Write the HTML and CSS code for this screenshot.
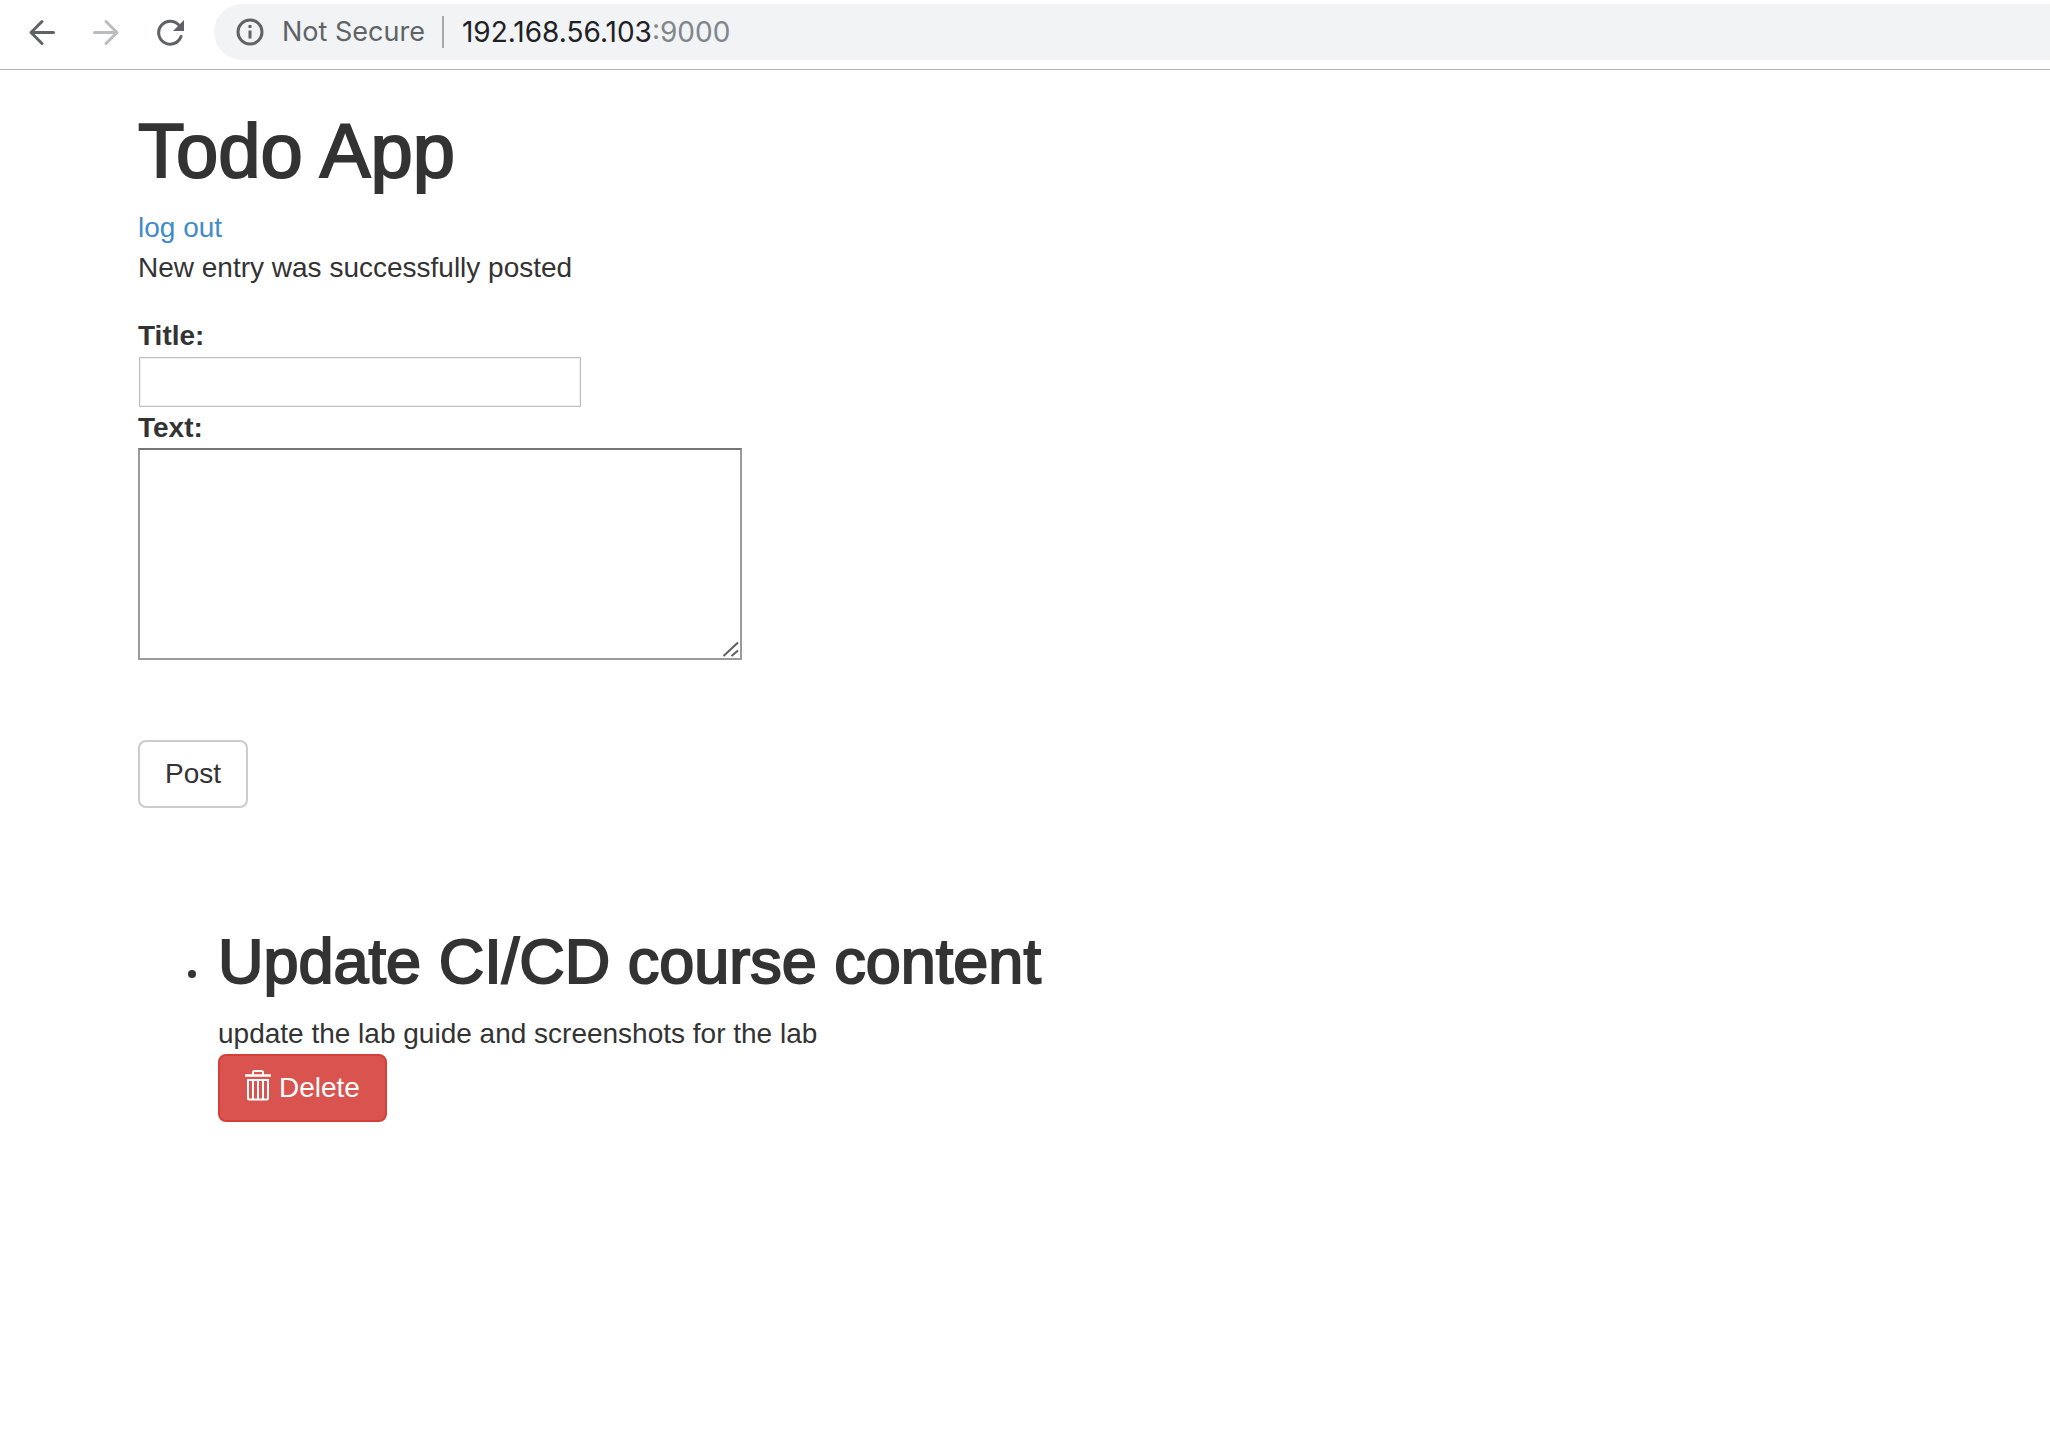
FILE: index.html
```html
<!DOCTYPE html>
<html lang="en">
<head>
<meta charset="utf-8">
<title>Todo App</title>
<link rel="stylesheet" href="styles.css">
</head>
<body>
<header class="toolbar">
  <nav class="nav-buttons" aria-label="Browser">
    <button class="icon-button" type="button" aria-label="Back">
      <svg width="28" height="28" viewBox="0 0 28 28" fill="none" stroke="#5f6368" stroke-width="3" stroke-linecap="round" stroke-linejoin="round"><path d="M25.5 14.5H3M14 3.500L3 14.500L14 25.500"/></svg>
    </button>
    <button class="icon-button" type="button" aria-label="Forward" disabled>
      <svg width="28" height="28" viewBox="0 0 28 28" fill="none" stroke="#babcbe" stroke-width="3" stroke-linecap="round" stroke-linejoin="round"><path d="M2.500 14.500H25M14 3.500L25 14.500L14 25.500"/></svg>
    </button>
    <button class="icon-button" type="button" aria-label="Reload">
      <svg width="28" height="28" viewBox="0 0 28 28"><path d="M23.700 8.200A11.500 11.500 0 1 0 25 18.500" fill="none" stroke="#5f6368" stroke-width="3" stroke-linecap="round"/><path d="M28 2V13H17Z" fill="#5f6368"/></svg>
    </button>
  </nav>
  <div class="address">
    <svg class="info" width="28" height="28" viewBox="0 0 28 28"><circle cx="14" cy="14" r="12" fill="none" stroke="#5f6368" stroke-width="3"/><path d="M12.500 7h3v3h-3zM12.500 12.500h3v8h-3z" fill="#5f6368"/></svg>
    <span class="security">Not Secure</span>
    <span class="divider"></span>
    <span class="url">192.168.56.103<span class="port">:9000</span></span>
  </div>
</header>
<main class="page">
  <h1 class="title">Todo App</h1>
  <a class="link" href="#">log out</a>
  <div class="flash">New entry was successfully posted</div>
  <form class="entry-form">
    <label class="label" for="title">Title:</label>
    <div class="field"><input class="text-input" id="title" type="text"></div>
    <label class="label" for="text">Text:</label>
    <div class="text-wrap">
      <textarea class="text-area" id="text"></textarea>
      <svg class="grip" width="20" height="20" viewBox="0 0 20 20" stroke="#5f5f5f" stroke-width="2"><path d="M3.500 18L18 4.500M11.500 18L18 12.500"/></svg>
    </div>
    <button class="button" type="button">Post</button>
  </form>
  <ul class="entries">
    <li class="entry">
      <h2 class="entry-title">Update CI/CD course content</h2>
      <div>update the lab guide and screenshots for the lab</div>
      <button class="button button-danger" type="button">
        <svg class="trash" width="26" height="32" viewBox="0 0 26 32" fill="none" stroke="#fff" stroke-width="2"><path d="M8 6V3.500Q8 2 9.500 2H16.500Q18 2 18 3.500V6"/><path d="M0 6.500H26" stroke-width="2.500"/><path d="M3 11H23V29Q23 30.500 21.500 30.500H4.500Q3 30.500 3 29ZM8 11V30M13 11V30M18 11V30"/></svg>
        <span>Delete</span>
      </button>
    </li>
  </ul>
</main>
</body>
</html>
```
FILE: styles.css
```css
* {
  box-sizing: border-box;
}

body {
  margin: 0;
  background: #fff;
  color: #333;
  font-family: "Liberation Sans", Arial, sans-serif;
  font-size: 28px;
  line-height: 40px;
}

.toolbar {
  display: flex;
  align-items: center;
  height: 70px;
  padding: 4px 0 9px 28px;
  border-bottom: 1px solid #b3b4b6;
}

.nav-buttons {
  display: flex;
  gap: 36px;
  margin-right: 30px;
}

.icon-button {
  display: flex;
  padding: 0;
  border: 0;
  background: none;
}

.address {
  display: flex;
  flex: 1;
  align-items: center;
  height: 56px;
  padding-left: 22px;
  border-radius: 28px 0 0 28px;
  background: #f1f3f4;
  font-family: Inter, sans-serif;
}

.security {
  margin-left: 18px;
  color: #5f6368;
  font-size: 27px;
}

.divider {
  width: 2px;
  height: 32px;
  margin: 0 18px 0 17px;
  background: #a8abae;
}

.url {
  color: #202124;
  font-size: 28px;
}

.port {
  color: #80868b;
}

.page {
  padding: 40px 30px 40px 138px;
}

.title,
.entry-title {
  font-weight: 400;
  -webkit-text-stroke: 2px #333;
}

.title {
  margin: 0 0 16px;
  font-size: 76px;
  line-height: 82px;
}

.link {
  color: #428bca;
  text-decoration: none;
}

.entry-form {
  display: flex;
  flex-direction: column;
  align-items: flex-start;
  margin-top: 28px;
}

.label {
  font-weight: 700;
}

.field {
  display: flex;
  padding: 1px;
}

.text-input {
  width: 442px;
  height: 50px;
  padding: 2px;
  border: 1px solid #c0c0c0;
  box-shadow: inset 0 0 0 1px #eee;
  font: inherit;
}

.text-wrap {
  display: flex;
  position: relative;
  margin-bottom: 80px;
}

.text-area {
  width: 604px;
  height: 212px;
  border: 2px solid #9a9a9a;
  border-top-color: #767676;
  font: inherit;
  resize: none;
}

.grip {
  position: absolute;
  right: 2px;
  bottom: 2px;
  pointer-events: none;
}

.button {
  display: inline-flex;
  align-items: center;
  height: 68px;
  padding: 0 25px;
  border: 2px solid #ccc;
  border-radius: 8px;
  background: #fff;
  color: #333;
  font: inherit;
}

.button-danger {
  display: flex;
  gap: 8px;
  border-color: #d43f3a;
  background: #d9534f;
  color: #fff;
}

.trash {
  margin-bottom: 6px;
}

.entries {
  margin: 120px 0 0;
  padding-left: 80px;
  list-style: none;
}

.entry {
  position: relative;
}

.entry::before {
  content: "";
  position: absolute;
  top: 42px;
  left: -30px;
  width: 8px;
  height: 8px;
  border-radius: 50%;
  background: #333;
}

.entry-title {
  margin: 0 0 20px;
  font-size: 63px;
  line-height: 66px;
}
```
